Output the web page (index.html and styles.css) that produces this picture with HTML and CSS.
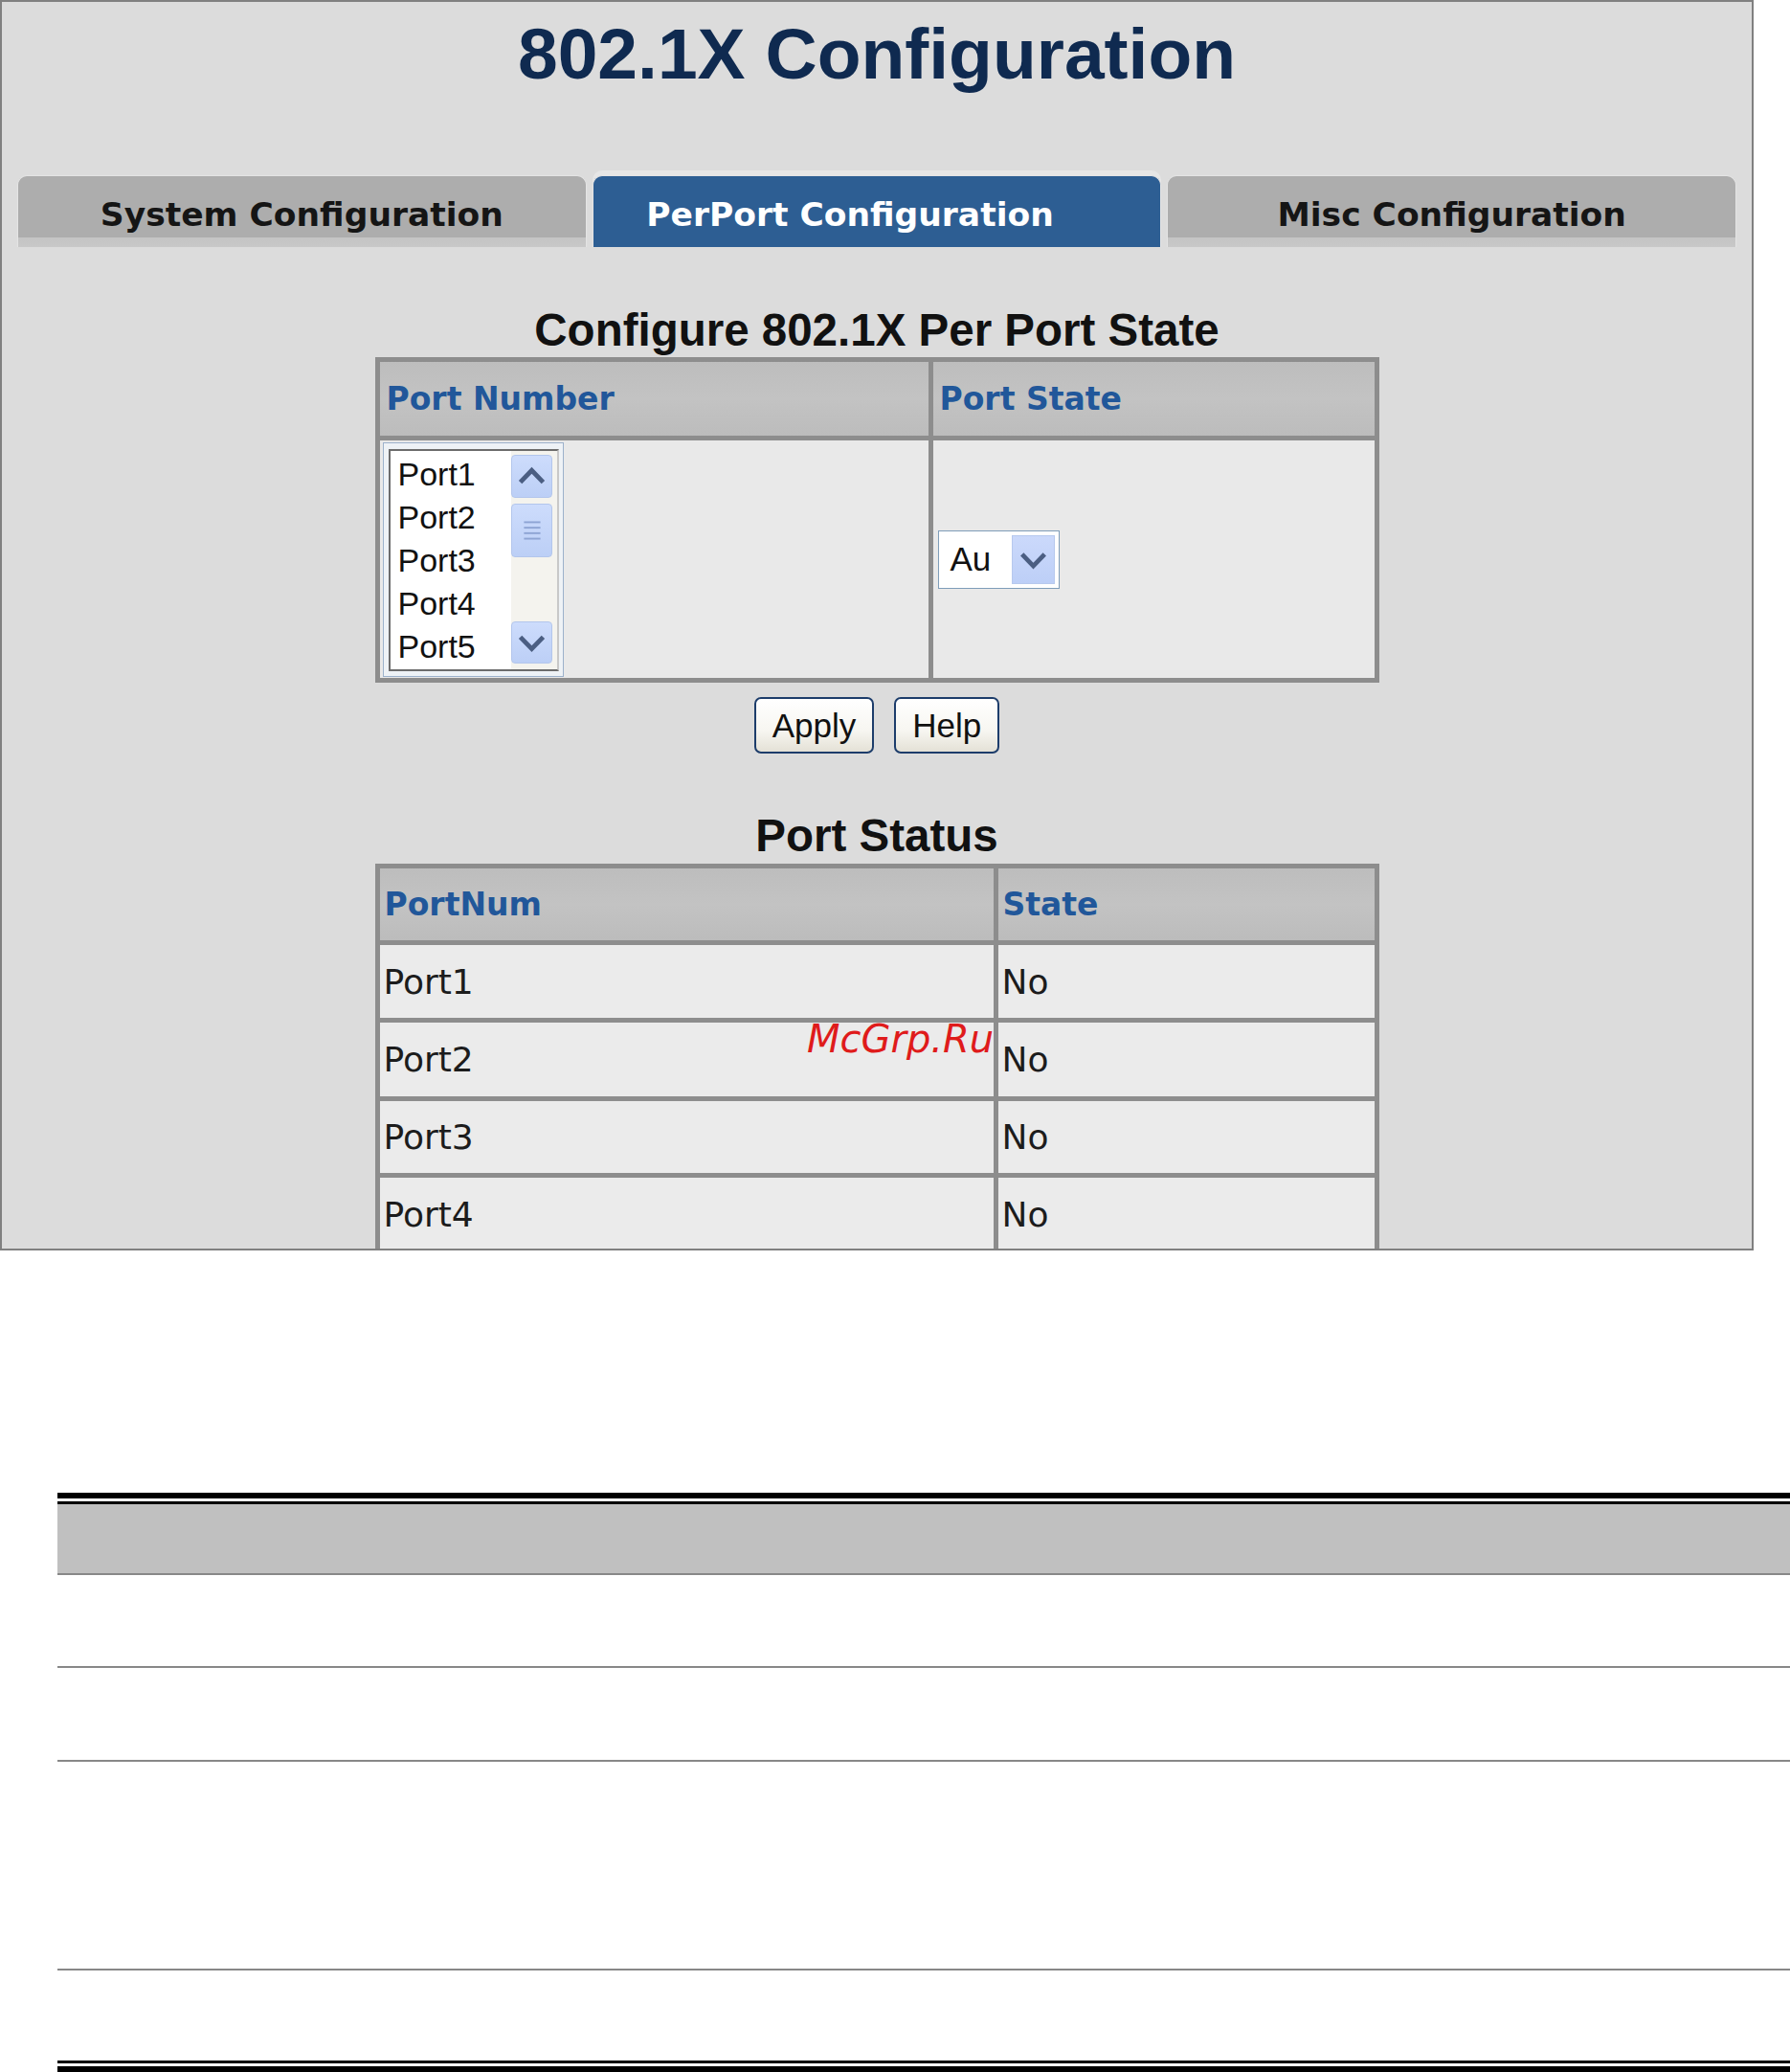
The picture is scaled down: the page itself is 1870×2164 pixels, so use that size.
FILE: index.html
```html
<!DOCTYPE html>
<html lang="en">
<head>
<meta charset="utf-8">
<title>802.1X Configuration</title>
<link rel="stylesheet" href="styles.css">
</head>
<body>
<div class="panel">
  <h1 class="title">802.1X Configuration</h1>
  <div class="tabs">
    <div class="tab">System Configuration</div>
    <div class="tab active">PerPort Configuration</div>
    <div class="tab">Misc Configuration</div>
  </div>

  <h2 class="heading h-cfg">Configure 802.1X Per Port State</h2>
  <div class="grid cfg">
    <div class="th">Port Number</div>
    <div class="th">Port State</div>
    <div class="td cell-list">
      <div class="listbox">
        <div class="list-inner">
          <ul class="items">
            <li>Port1</li>
            <li>Port2</li>
            <li>Port3</li>
            <li>Port4</li>
            <li>Port5</li>
          </ul>
          <div class="scrollbar">
            <div class="sb-btn sb-up">
              <svg viewBox="0 0 43 45" width="43" height="45"><polyline points="9,29 21.5,16 34,29" fill="none" stroke="#4b5e82" stroke-width="5"/></svg>
            </div>
            <div class="sb-thumb">
              <svg viewBox="0 0 43 56" width="43" height="56">
                <line x1="13" y1="19" x2="31" y2="19" stroke="#8ea4d4" stroke-width="2"/>
                <line x1="13" y1="25" x2="31" y2="25" stroke="#8ea4d4" stroke-width="2"/>
                <line x1="13" y1="31" x2="31" y2="31" stroke="#8ea4d4" stroke-width="2"/>
                <line x1="13" y1="37" x2="31" y2="37" stroke="#8ea4d4" stroke-width="2"/>
              </svg>
            </div>
            <div class="sb-track"></div>
            <div class="sb-btn sb-down">
              <svg viewBox="0 0 43 44" width="43" height="44"><polyline points="9,16 21.5,29 34,16" fill="none" stroke="#4b5e82" stroke-width="5"/></svg>
            </div>
          </div>
        </div>
      </div>
    </div>
    <div class="td cell-select">
      <div class="select">
        <span class="sel-text">Au</span>
        <span class="sel-btn">
          <svg viewBox="0 0 45 52" width="45" height="52"><polyline points="10,20 22.5,33 35,20" fill="none" stroke="#4b5e82" stroke-width="5"/></svg>
        </span>
      </div>
    </div>
  </div>

  <div class="actions">
    <button class="btn" type="button">Apply</button>
    <button class="btn" type="button">Help</button>
  </div>

  <h2 class="heading h-status">Port Status</h2>
  <div class="grid status">
    <div class="th">PortNum</div>
    <div class="th">State</div>
    <div class="td">Port1</div>
    <div class="td">No</div>
    <div class="td">Port2</div>
    <div class="td">No</div>
    <div class="td">Port3</div>
    <div class="td">No</div>
    <div class="td">Port4</div>
    <div class="td">No</div>
  </div>

  <div class="watermark">McGrp.Ru</div>
</div>

<div class="doc">
  <div class="doc-rule-top"></div>
  <div class="doc-head"></div>
  <div class="doc-row r1"></div>
  <div class="doc-row r2"></div>
  <div class="doc-row r3"></div>
  <div class="doc-row r4 last"></div>
  <div class="doc-rule-bottom"></div>
</div>
</body>
</html>
```

FILE: styles.css
```css
* {
  box-sizing: border-box;
}

html, body {
  margin: 0;
  padding: 0;
  background: #ffffff;
  overflow: hidden;
}

body {
  font-family: "Liberation Sans", Arial, sans-serif;
  width: 1870px;
  height: 2164px;
}

/* ---------- panel ---------- */
.panel {
  position: relative;
  width: 1832px;
  height: 1306px;
  border: 2px solid #808080;
  background: #dcdcdc;
  overflow: hidden;
}

.title {
  margin: 11px 0 0;
  font-family: "Liberation Sans", Arial, sans-serif;
  font-weight: bold;
  font-size: 75px;
  line-height: 86px;
  color: #0f2a50;
  text-align: center;
}

/* ---------- tabs ---------- */
.tabs {
  display: grid;
  grid-template-columns: repeat(3, minmax(0, 1fr));
  gap: 6px;
  margin-top: 84px;
  padding: 0 16px;
  height: 75px;
}

.tab {
  display: flex;
  justify-content: center;
  align-items: flex-start;
  padding-top: 23px;
  border-radius: 10px 10px 0 0;
  background: linear-gradient(to bottom, #adadad 0, #adadad 86%, #c4c4c4 86%, #c8c8c8 100%);
  border: 1px solid #e4e4e4;
  border-bottom: 0;
  font-family: "DejaVu Sans", Verdana, sans-serif;
  font-weight: bold;
  font-size: 34.5px;
  line-height: 34.5px;
  color: #151515;
  white-space: nowrap;
}

.tab.active {
  background: #2d5e93;
  color: #ffffff;
  padding-right: 56px;
  box-shadow: 0 -5px 0 #e6e6e6;
}

/* ---------- headings ---------- */
.heading {
  margin: 0;
  font-family: "Liberation Sans", Arial, sans-serif;
  font-weight: bold;
  font-size: 47.5px;
  line-height: 47px;
  color: #111111;
  text-align: center;
}

.h-cfg {
  margin-top: 63px;
}

.h-status {
  margin-top: 62px;
}

/* ---------- grid tables ---------- */
.grid {
  display: grid;
  width: 1049px;
  margin: 0 auto;
  gap: 5px;
  padding: 5px;
  background: #8d8d8d;
}

.cfg {
  margin-top: 5px;
  grid-template-columns: 573px 461px;
  grid-template-rows: 77px 248px;
}

.status {
  margin-top: 6px;
  grid-template-columns: 641px 393px;
  grid-template-rows: 75px 76px 77px 75px 76px;
}

.th {
  background: linear-gradient(to bottom, #bdbdbd, #c3c3c3 50%, #bcbcbc);
  display: flex;
  align-items: center;
  font-family: "DejaVu Sans", Verdana, sans-serif;
  font-weight: bold;
  font-size: 33px;
  color: #21579a;
  padding-left: 7px;
  white-space: nowrap;
}

.status .th {
  padding-left: 5px;
}

.td {
  background: #ebebeb;
  display: flex;
  align-items: center;
  font-family: "DejaVu Sans", Verdana, sans-serif;
  font-size: 36px;
  color: #1c1c1c;
  padding-left: 4px;
}

.cfg .td {
  background: #e9e9e9;
}

/* ---------- listbox ---------- */
.cell-list {
  align-items: flex-start;
  padding: 2px 0 0 3px;
}

.listbox {
  width: 189px;
  height: 245px;
  border: 1px solid #9cb1cb;
  padding: 6px 4px 5px 5px;
  background: #eef2f6;
}

.list-inner {
  display: flex;
  height: 100%;
  border: 2px solid #6c6c6c;
  border-right-color: #c8c8c8;
  background: #ffffff;
}

.items {
  list-style: none;
  margin: 0;
  padding: 2px 0 0 8px;
  width: 126px;
  font-family: "Liberation Sans", Arial, sans-serif;
  font-size: 34px;
  line-height: 45px;
  color: #111111;
}

.scrollbar {
  display: flex;
  flex-direction: column;
  width: 48px;
  padding: 4px 5px 6px 0;
  background: #f4f3ee;
}

.sb-btn,
.sb-thumb {
  border: 1px solid #b3c6ec;
  border-radius: 4px;
  background: linear-gradient(to bottom, #cddcfc, #bccff6);
}

.sb-btn svg,
.sb-thumb svg {
  display: block;
  width: 100%;
  height: 100%;
}

.sb-up {
  height: 45px;
}

.sb-thumb {
  height: 56px;
  margin-top: 6px;
}

.sb-track {
  flex: 1;
}

.sb-down {
  height: 44px;
}

/* ---------- select ---------- */
.cell-select {
  padding-left: 5px;
}

.select {
  display: flex;
  width: 127px;
  height: 61px;
  border: 1px solid #7f9db9;
  padding: 4px;
  background: #ffffff;
}

.sel-text {
  flex: 1;
  display: flex;
  align-items: center;
  padding-left: 8px;
  font-family: "Liberation Sans", Arial, sans-serif;
  font-size: 35px;
  color: #111111;
}

.sel-btn {
  width: 45px;
  background: linear-gradient(to bottom, #cbd9fb, #bdcff7);
  border: 1px solid #b7c9ee;
}

.sel-btn svg {
  display: block;
  width: 100%;
  height: 100%;
}

/* ---------- buttons ---------- */
.actions {
  display: flex;
  justify-content: center;
  gap: 21px;
  margin-top: 15px;
}

.btn {
  height: 59px;
  padding: 0 17px;
  border: 2px solid #1d3d6b;
  border-radius: 7px;
  background: linear-gradient(to bottom, #ffffff 0, #f7f6f1 60%, #e4e1d6 100%);
  font-family: "Liberation Sans", Arial, sans-serif;
  font-size: 35px;
  color: #111111;
}

/* ---------- watermark ---------- */
.watermark {
  position: absolute;
  left: 841px;
  top: 1063px;
  font-family: "DejaVu Sans", Verdana, sans-serif;
  font-style: italic;
  font-size: 40px;
  line-height: 40px;
  color: #df1b1b;
}

/* ---------- document table below ---------- */
.doc {
  margin: 253px 0 0 60px;
}

.doc-rule-top {
  height: 12px;
  border-top: 6px solid #000000;
  border-bottom: 3px solid #000000;
}

.doc-head {
  height: 74px;
  background: #c0c0c0;
  border-bottom: 2px solid #888888;
}

.doc-row {
  border-bottom: 2px solid #888888;
}

.r1 {
  height: 97px;
}

.r2 {
  height: 98px;
}

.r3 {
  height: 218px;
}

.r4 {
  height: 94px;
  border-bottom: 0;
}

.doc-rule-bottom {
  height: 12px;
  border-top: 3px solid #000000;
  border-bottom: 6px solid #000000;
}
```
